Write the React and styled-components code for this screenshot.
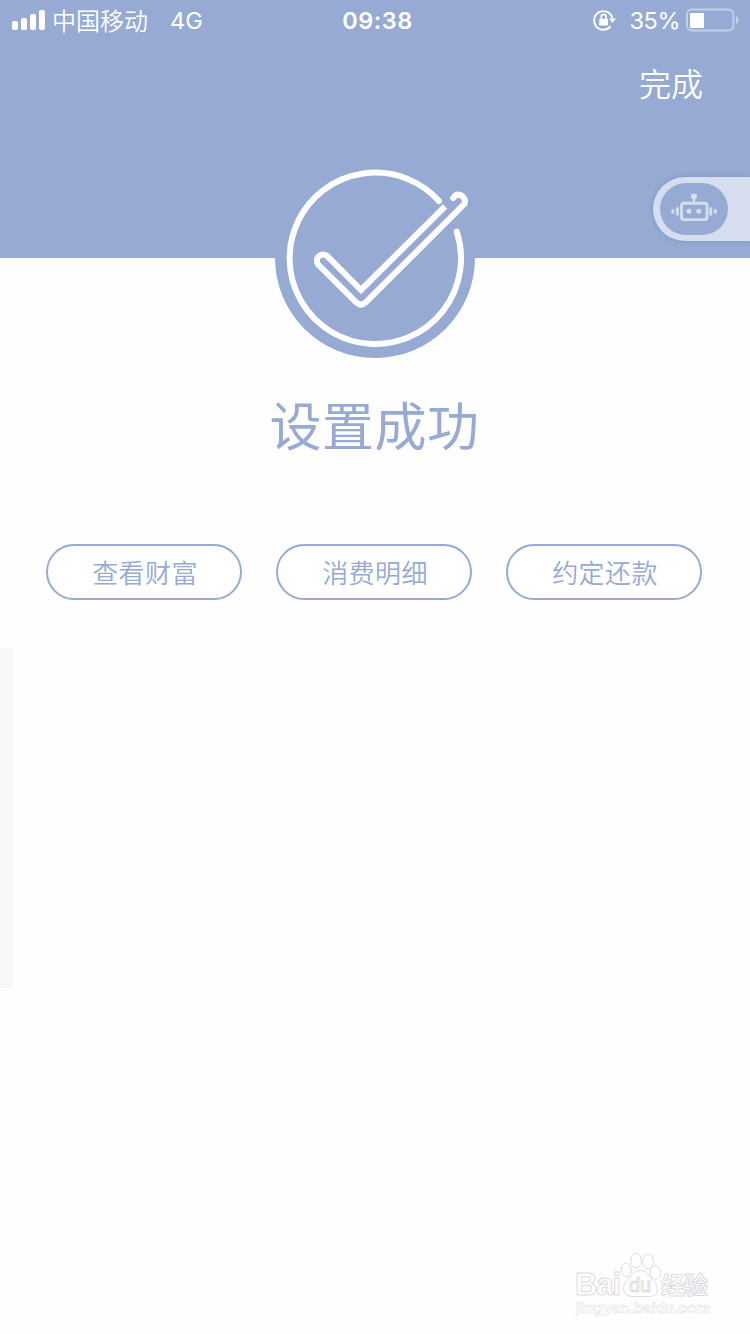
import React from 'react';
import styled, { createGlobalStyle } from 'styled-components';

const BLUE = '#96aad4';

const GlobalStyle = createGlobalStyle`
  body {
    margin: 0;
    background: #fefefe;
    overflow: hidden;
    font-family: Inter, 'Noto Sans CJK SC', sans-serif;
  }
`;

const Page = styled.div`
  position: relative;
  width: 750px;
  height: 1334px;
  overflow: hidden;
  background: #fefefe;
`;

const Header = styled.header`
  height: 258px;
  background: ${BLUE};
  color: #fff;
`;

const StatusBar = styled.div`
  display: grid;
  grid-template-columns: 1fr auto 1fr;
  align-items: center;
  height: 40px;
  padding: 0 10px 0 12px;
  font-size: 24px;
  line-height: 38px;
`;

const StatusLeft = styled.div`
  display: flex;
  align-items: center;
`;

const StatusRight = styled.div`
  display: flex;
  align-items: center;
  justify-content: flex-end;
`;

const Signal = styled.div`
  display: flex;
  align-items: flex-end;
  gap: 3px;
  height: 20px;
  margin-right: 7px;
`;

const Bar = styled.i`
  width: 6px;
  height: ${({ $height }) => $height}px;
  border-radius: 2px;
  background: #fff;
`;

const Carrier = styled.span`
  font-family: 'Noto Sans CJK SC', sans-serif;
  font-weight: 350;
  height: 39px;
`;

const Network = styled.span`
  margin-left: 22px;
  font-size: 23.5px;
  font-weight: 400;
  height: 36px;
`;

const Time = styled.span`
  padding: 2px 0 0 3px;
  font-size: 23.5px;
  font-weight: 600;
  letter-spacing: 0.5px;
`;

const Percent = styled.span`
  margin: 0 6px 0 14px;
  padding-top: 2px;
  font-size: 23.5px;
  font-weight: 400;
  letter-spacing: -0.5px;
`;

const NavBar = styled.div`
  display: flex;
  align-items: center;
  justify-content: flex-end;
  height: 84px;
  padding-right: 47px;
  font-family: 'Noto Sans CJK SC', sans-serif;
  font-size: 32px;
  font-weight: 350;
`;

const RobotTab = styled.div`
  display: flex;
  align-items: center;
  box-sizing: border-box;
  width: 97px;
  height: 64px;
  margin: 53px 0 0 auto;
  padding-left: 7px;
  border-radius: 32px 0 0 32px;
  background: #d5ddee;
  box-shadow: 0 0 5px rgba(80, 100, 150, 0.35);
`;

const RobotFace = styled.div`
  width: 68px;
  height: 52px;
  border-radius: 26px;
  background: ${BLUE};
`;

const Result = styled.main`
  display: flex;
  flex-direction: column;
  align-items: center;
`;

const Badge = styled.div`
  width: 200px;
  height: 200px;
  margin-top: -100px;
  border-radius: 50%;
  background: ${BLUE};
`;

const Title = styled.h1`
  margin: 27px 1px 0 0;
  height: 78px;
  line-height: 78px;
  color: ${BLUE};
  font-family: 'Noto Sans CJK SC', sans-serif;
  font-size: 52px;
  font-weight: 400;
  letter-spacing: 0.5px;
`;

const Actions = styled.div`
  display: flex;
  gap: 34px;
  margin: 81px 2px 0 0;
`;

const ActionButton = styled.button`
  box-sizing: border-box;
  width: 196px;
  height: 56px;
  padding: 0 0 2px 2px;
  border: 2px solid ${BLUE};
  border-radius: 28px;
  background: #fff;
  color: ${BLUE};
  font-family: 'Noto Sans CJK SC', sans-serif;
  font-size: 26px;
  font-weight: 350;
  letter-spacing: 0.4px;
`;

const SideStrip = styled.div`
  width: 13px;
  height: 340px;
  margin-top: 48px;
  background: #f7f7f7;
`;

const Watermark = styled.svg`
  position: absolute;
  left: 570px;
  top: 1248px;
`;

const SvgText = styled.text`
  font-family: 'Liberation Sans', 'Noto Sans CJK SC', sans-serif;
  font-weight: ${({ $weight }) => $weight || 700};
  font-size: ${({ $size }) => $size}px;
`;

const signalHeights = [9, 12, 16, 20];
const actions = ['查看财富', '消费明细', '约定还款'];

const RotationLock = () => (
  <svg width="24" height="24" viewBox="0 0 24 24" fill="none">
    <path d="M20.4 10A9.3 9.3 0 1 0 18.6 18.4" stroke="#fff" strokeWidth="1.9" />
    <path d="M17 10.6H24L20.5 15Z" fill="#fff" />
    <rect x="7.2" y="10.8" width="8.8" height="6.6" rx="1" fill="#fff" />
    <path d="M9.2 11V8.8a2.4 2.4 0 0 1 4.8 0v2.2" stroke="#fff" strokeWidth="1.6" />
  </svg>
);

const Battery = () => (
  <svg width="54" height="24" viewBox="0 0 54 24" fill="none">
    <rect x="1" y="1.5" width="46.5" height="21" rx="5" stroke="#c3cfe8" strokeWidth="2" />
    <rect x="4" y="5" width="14" height="15" rx="1" fill="#fff" />
    <path d="M50 8c3.5 1.5 3.5 6.5 0 8Z" fill="#c3cfe8" />
  </svg>
);

const CheckMark = () => (
  <svg width="200" height="200" viewBox="0 0 200 200" fill="none" stroke="#fff" strokeWidth="6">
    <path d="M164 43A85.7 85.7 0 1 0 181.7 73.5" strokeLinecap="round" />
    <path d="M170 48.5L86 132L52 97.8A6.3 6.3 0 0 0 43 106.4L81 144.2Q86 149 91 144.2L189.2 46.1A6.5 6.5 0 0 0 180.4 37.5" />
    <path d="M180.4 37.5L178.2 40" strokeLinecap="round" />
  </svg>
);

const Robot = () => (
  <svg width="68" height="52" viewBox="660 183 68 52" fill="none" stroke="#d5ddee">
    <rect x="681.5" y="203.2" width="25.5" height="16.4" rx="2.5" strokeWidth="2.9" />
    <path d="M694 197V203" strokeWidth="2.2" />
    <path d="M677.4 208.5V214.3M710.7 208.5V214.3" strokeWidth="3" strokeLinecap="round" />
    <path d="M672.8 210.5V212.3M715.3 210.5V212.3" strokeWidth="3" strokeLinecap="round" />
    <g fill="#d5ddee" stroke="none">
      <circle cx="694" cy="196.5" r="3" />
      <circle cx="689" cy="211.3" r="2.5" />
      <circle cx="698.7" cy="211.3" r="2.5" />
    </g>
  </svg>
);

const BaiduMark = () => (
  <Watermark width="150" height="80" viewBox="570 1248 150 80" fill="#fff" stroke="#dcdcdc">
    <SvgText $size={31} x="575" y="1295" textLength="46">Bai</SvgText>
    <ellipse cx="626.3" cy="1270" rx="5" ry="6.8" />
    <ellipse cx="636" cy="1260.5" rx="5.2" ry="7.3" />
    <ellipse cx="648" cy="1261.5" rx="5.4" ry="7.3" />
    <ellipse cx="655.5" cy="1272.5" rx="5.3" ry="6.7" />
    <path d="M640.5 1270.5C647 1270.5 648.5 1276 652.5 1279.5C659 1284.5 660 1296.5 649 1296.5H633C621.5 1296.5 621.5 1285 628 1279.5C632 1276 634 1270.5 640.5 1270.5Z" />
    <SvgText $size={20} $weight={400} x="629" y="1292" textLength="22">du</SvgText>
    <SvgText $size={24} x="661" y="1294" textLength="47">经验</SvgText>
    <SvgText $size={15.5} x="576" y="1313" textLength="134" lengthAdjust="spacingAndGlyphs" strokeWidth="0.5">jingyan.baidu.com</SvgText>
  </Watermark>
);

const App = () => {
  return (
    <Page>
      <GlobalStyle />
      <Header>
        <StatusBar>
          <StatusLeft>
            <Signal>
              {signalHeights.map((height) => (
                <Bar key={height} $height={height} />
              ))}
            </Signal>
            <Carrier>中国移动</Carrier>
            <Network>4G</Network>
          </StatusLeft>
          <Time>09:38</Time>
          <StatusRight>
            <RotationLock />
            <Percent>35%</Percent>
            <Battery />
          </StatusRight>
        </StatusBar>
        <NavBar>完成</NavBar>
        <RobotTab>
          <RobotFace>
            <Robot />
          </RobotFace>
        </RobotTab>
      </Header>
      <Result>
        <Badge>
          <CheckMark />
        </Badge>
        <Title>设置成功</Title>
        <Actions>
          {actions.map((label) => (
            <ActionButton key={label}>{label}</ActionButton>
          ))}
        </Actions>
      </Result>
      <SideStrip />
      <BaiduMark />
    </Page>
  );
};

export default App;
